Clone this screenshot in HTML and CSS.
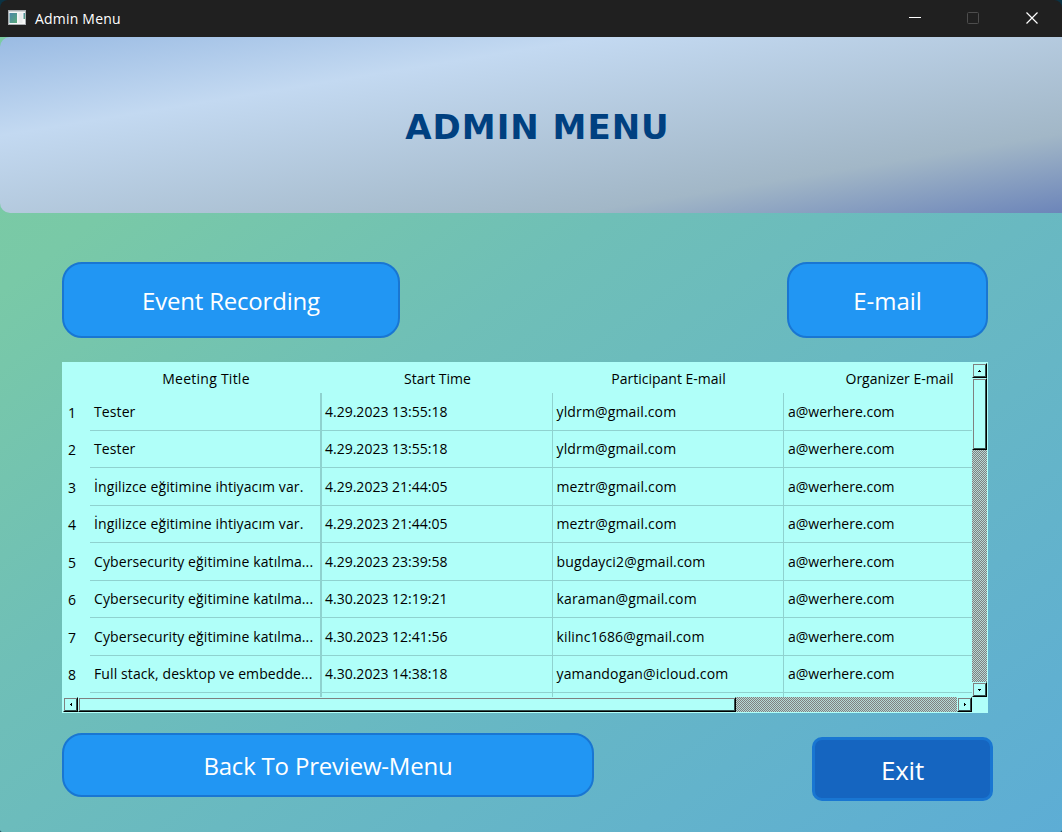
FILE: index.html
```html
<!DOCTYPE html>
<html lang="en">
<head>
<meta charset="utf-8">
<title>Admin Menu</title>
<link rel="stylesheet" href="styles.css">
</head>
<body>
<div class="window">
  <header class="titlebar">
    <svg class="app-icon" width="18" height="15" viewBox="0 0 18 15">
      <defs><linearGradient id="pane" x1="0" y1="0" x2="1" y2="1"><stop offset="0" stop-color="#4c86a8"/><stop offset="1" stop-color="#58a878"/></linearGradient></defs>
      <rect width="18" height="15" fill="#a9adb0"/><rect x="1" y="1.500" width="16" height="12.500" fill="#f6f7f7"/>
      <rect x="1.500" y="3" width="7.500" height="10" fill="url(#pane)"/><rect x="10.500" y="3" width="4" height="10" fill="#e9ebec"/><rect x="15.500" y="3" width="1.500" height="6" fill="url(#pane)"/>
    </svg>
    <span class="window-title">Admin Menu</span>
    <svg class="controls" width="132" height="14" viewBox="0 0 132 14" fill="none">
      <path d="M0 5.500h12" stroke="#fff"/>
      <rect x="58.500" y="0.500" width="11" height="11" rx="1" stroke="#4d4d4d"/>
      <path d="M117.500 0.500l11 11m0-11l-11 11" stroke="#fff" stroke-width="1.200"/>
    </svg>
  </header>
  <main class="client">
    <section class="banner"><h1>ADMIN MENU</h1></section>
    <div class="actions">
      <button class="btn record"><span>Event Recording</span></button>
      <button class="btn email"><span>E-mail</span></button>
    </div>
    <section class="grid">
      <div class="view">
        <div class="row head"><span></span><span>Meeting Title</span><span>Start Time</span><span>Participant E-mail</span><span>Organizer E-mail</span></div>
        <div class="row tall"><span>1</span><span>Tester</span><span>4.29.2023 13:55:18</span><span>yldrm@gmail.com</span><span>a@werhere.com</span></div>
        <div class="row"><span>2</span><span>Tester</span><span>4.29.2023 13:55:18</span><span>yldrm@gmail.com</span><span>a@werhere.com</span></div>
        <div class="row tall"><span>3</span><span>İngilizce eğitimine ihtiyacım var.</span><span>4.29.2023 21:44:05</span><span>meztr@gmail.com</span><span>a@werhere.com</span></div>
        <div class="row"><span>4</span><span>İngilizce eğitimine ihtiyacım var.</span><span>4.29.2023 21:44:05</span><span>meztr@gmail.com</span><span>a@werhere.com</span></div>
        <div class="row tall"><span>5</span><span>Cybersecurity eğitimine katılma...</span><span>4.29.2023 23:39:58</span><span>bugdayci2@gmail.com</span><span>a@werhere.com</span></div>
        <div class="row"><span>6</span><span>Cybersecurity eğitimine katılma...</span><span>4.30.2023 12:19:21</span><span>karaman@gmail.com</span><span>a@werhere.com</span></div>
        <div class="row tall"><span>7</span><span>Cybersecurity eğitimine katılma...</span><span>4.30.2023 12:41:56</span><span>kilinc1686@gmail.com</span><span>a@werhere.com</span></div>
        <div class="row"><span>8</span><span>Full stack, desktop ve embedde...</span><span>4.30.2023 14:38:18</span><span>yamandogan@icloud.com</span><span>a@werhere.com</span></div>
        <div class="row"><span></span><span></span><span></span><span></span><span></span></div>
      </div>
      <div class="vbar">
        <svg class="bevel" width="15" height="15"><path class="arrow" d="M7 7h1v1h1v1H6V8h1z"/></svg>
        <div class="bevel vthumb"></div><div class="track"></div>
        <svg class="bevel" width="15" height="15"><path class="arrow" d="M6 7h3v1H8v1H7V8H6z"/></svg>
      </div>
      <div class="hbar">
        <svg class="bevel" width="15" height="15"><path class="arrow" d="M7 7h1V6h1v3H8V8H7z"/></svg>
        <div class="bevel hthumb"></div><div class="track"></div>
        <svg class="bevel" width="15" height="15"><path class="arrow" d="M7 6h1v1h1v1H8v1H7z"/></svg>
      </div>
    </section>
    <div class="footer">
      <button class="btn back"><span>Back To Preview-Menu</span></button>
      <button class="btn exit"><span>Exit</span></button>
    </div>
  </main>
</div>
</body>
</html>
```
FILE: styles.css
```css
* { box-sizing: border-box; }
body { margin: 0; background: #0b3344; font-family: "Open Sans", "Noto Sans", sans-serif; }
.window { width: 1062px; height: 832px; overflow: hidden; border-radius: 8px 8px 2px 2px; display: flex; flex-direction: column; }
.titlebar { height: 37px; flex: none; background: #202020; color: #fff; display: flex; align-items: center; padding: 0 21px 0 8px; }
.app-icon { margin-bottom: 2px; }
.window-title { font-size: 14px; margin-left: 9px; letter-spacing: 0.2px; }
.controls { margin-left: auto; }
.client { flex: 1; background: linear-gradient(to bottom right, #7bcba2 0%, #79c9a7 16%, #6fbfb7 40%, #5dadd5 100%); }
.banner { width: 1072px; height: 176px; border-radius: 10px; display: flex; align-items: center; justify-content: center; background: linear-gradient(to bottom right, #9abbe3 0%, #c3d9f1 28%, #a2b7c7 77%, #6b84b9 100%); }
h1 { margin: 4px 0 0 3px; color: #004080; font: bold 34px "DejaVu Sans", sans-serif; letter-spacing: 1px; }
.actions { display: flex; justify-content: space-between; padding: 49px 74px 24px 62px; }
.btn { border: 2px solid #1976d2; border-radius: 20px; background: #2196f3; color: #fff; padding: 0; display: flex; align-items: center; justify-content: center; font: 24px "Open Sans", "Noto Sans", sans-serif; letter-spacing: -0.2px; }
.record { width: 338px; height: 76px; }
.email { width: 201px; height: 76px; letter-spacing: 0; }
.back { width: 532px; height: 64px; }
.exit { width: 181px; height: 64px; margin-top: 4px; padding-top: 2px; border-width: 3px; border-radius: 10px; background: #1565c0; font-size: 26px; }
.grid { width: 926px; height: 351px; margin-left: 62px; background: #b0fff9; padding: 0 1px 1px 0; display: grid; grid-template: 335px 15px / 910px 15px; font-size: 14px; color: #000; }
.view { overflow: hidden; }
.row { width: 953px; height: 37px; display: grid; grid-template-columns: 28px 232px 231px 231px 231px; line-height: 36px; white-space: nowrap; }
.tall { height: 38px; line-height: 37px; }
.row span { border: solid #8fd2cf; border-width: 0 1px 1px 0; padding-left: 4px; }
.row span:nth-child(2) { border-right-width: 2px; letter-spacing: 0.1px; }
.row span:nth-child(3) { padding-left: 3px; }
.row span:nth-child(4) { padding-left: 3.5px; letter-spacing: 0.15px; }
.row span:first-child { border: 0; padding: 1px 0 0 6px; }
.head { height: 31px; line-height: 34px; text-align: center; }
.row.head span { border: 0; padding: 0; }
.row.head span:nth-child(2) { letter-spacing: 0.25px; }
.row.head span:nth-child(4) { letter-spacing: 0; }
.vbar { padding-top: 1px; display: flex; flex-direction: column; }
.hbar { padding-left: 1px; display: flex; }
.bevel { flex: none; border: 1px solid #b0fff9; border-right-color: #000; border-bottom-color: #000; box-shadow: inset 1px 1px #808080, inset -1px -1px #34504e; }
.arrow { fill: #000; transform: translate(-1px, -1px); }
.vthumb { height: 72px; }
.hthumb { width: 658px; }
.track { flex: 1; background: conic-gradient(#808080 25%, #b5d9d5 0 50%, #808080 0 75%, #b5d9d5 0) 0 0 / 2px 2px; }
.footer { display: flex; justify-content: space-between; padding: 20px 69px 0 62px; }
```
